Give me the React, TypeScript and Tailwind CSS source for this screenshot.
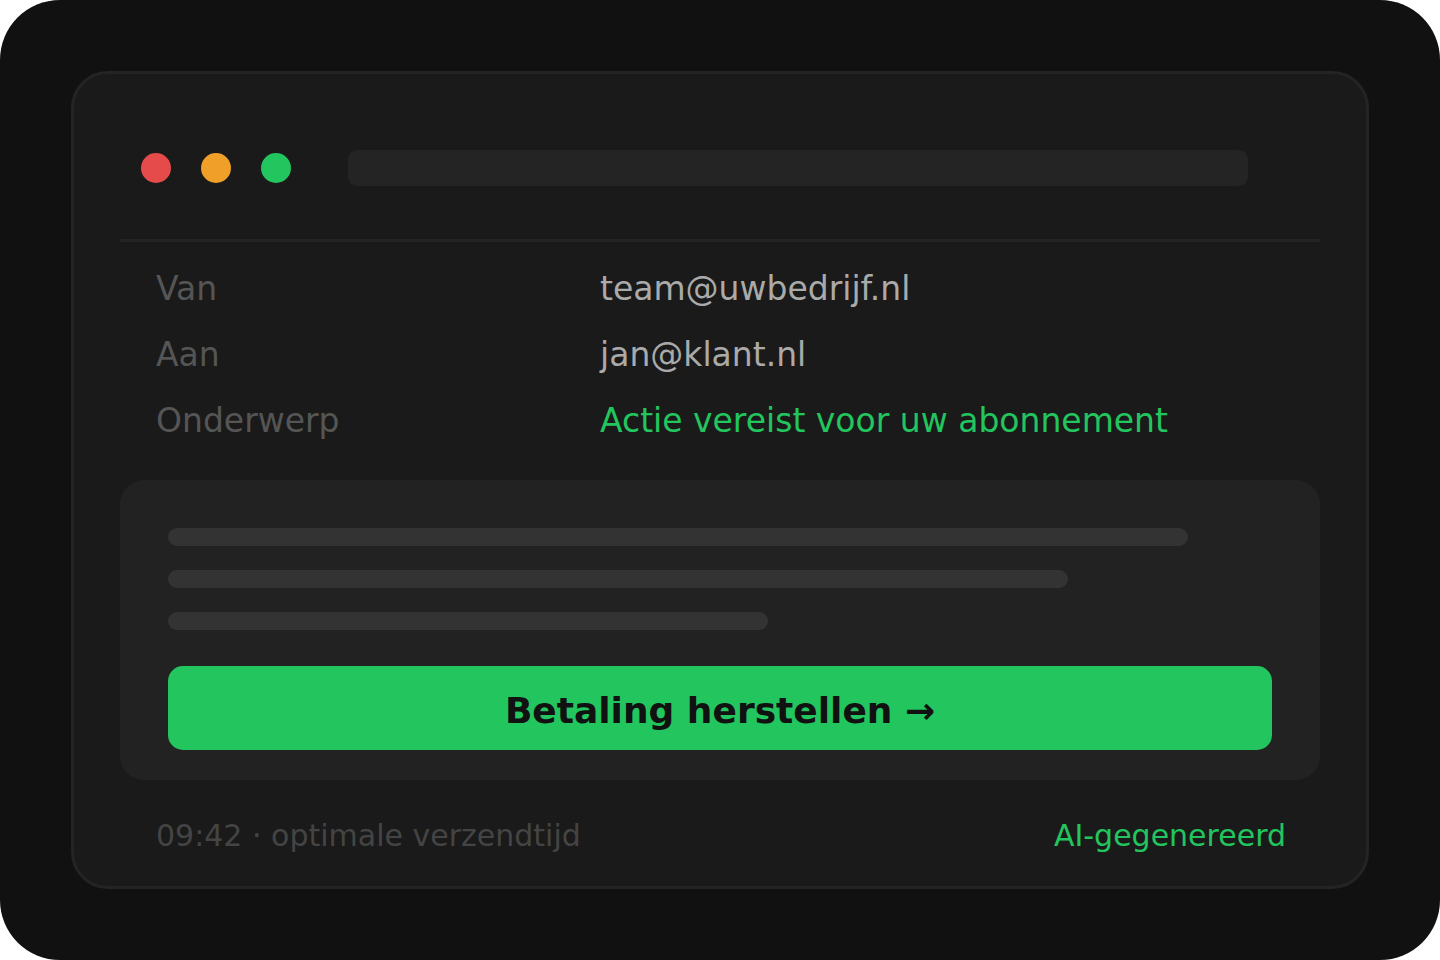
const headers = [
  { label: "Van", value: "team@uwbedrijf.nl", tone: "text-[#aaaaaa]" },
  { label: "Aan", value: "jan@klant.nl", tone: "text-[#aaaaaa]" },
  { label: "Onderwerp", value: "Actie vereist voor uw abonnement", tone: "text-[#22c55e]" },
];

function WindowBar() {
  return (
    <header className="mx-[46px] flex h-[168px] items-center border-b-3 border-[#242424] pt-[22px] pr-[72px] pl-[21px]">
      <div className="flex gap-[30px]">
        <span className="size-[30px] rounded-full bg-[#e54b4b]" />
        <span className="size-[30px] rounded-full bg-[#f0a028]" />
        <span className="size-[30px] rounded-full bg-[#22c55e]" />
      </div>
      <div className="ml-[57px] h-9 flex-1 rounded-[9px] bg-[#242424]" />
    </header>
  );
}

function MessageHeaders() {
  return (
    <dl className="mt-[14px] px-[82px] text-[33px] leading-[66px]">
      {headers.map(({ label, value, tone }) => (
        <div key={label} className="flex">
          <dt className="w-[444px] shrink-0 text-[#555555]">{label}</dt>
          <dd className={tone}>{value}</dd>
        </div>
      ))}
    </dl>
  );
}

function MessageBody() {
  return (
    <section className="mx-[46px] mt-[26px] rounded-3xl bg-[#222222] px-12 pt-12 pb-[30px]">
      <div className="flex flex-col gap-6">
        <div className="h-[18px] w-[1020px] max-w-full rounded-full bg-[#333333]" />
        <div className="h-[18px] w-[900px] max-w-full rounded-full bg-[#333333]" />
        <div className="h-[18px] w-[600px] max-w-full rounded-full bg-[#333333]" />
      </div>
      <button
        type="button"
        className="mt-9 block h-[84px] w-full rounded-[15px] bg-[#22c55e] pt-[6px] text-4xl font-bold text-[#111111]"
      >
        Betaling herstellen →
      </button>
    </section>
  );
}

export default function App() {
  return (
    <main className="min-h-screen rounded-[60px] bg-[#111111] p-[71px] font-['DejaVu_Sans',sans-serif]">
      <article className="rounded-[37px] border-3 border-[#242424] bg-[#1a1a1a] pb-[28px]">
        <WindowBar />
        <MessageHeaders />
        <MessageBody />
        <footer className="mt-[33px] flex justify-between pr-20 pl-[82px] text-[30px] leading-[45px]">
          <span className="text-[#444444]">09:42 · optimale verzendtijd</span>
          <span className="text-[#22c55e]">AI-gegenereerd</span>
        </footer>
      </article>
    </main>
  );
}
